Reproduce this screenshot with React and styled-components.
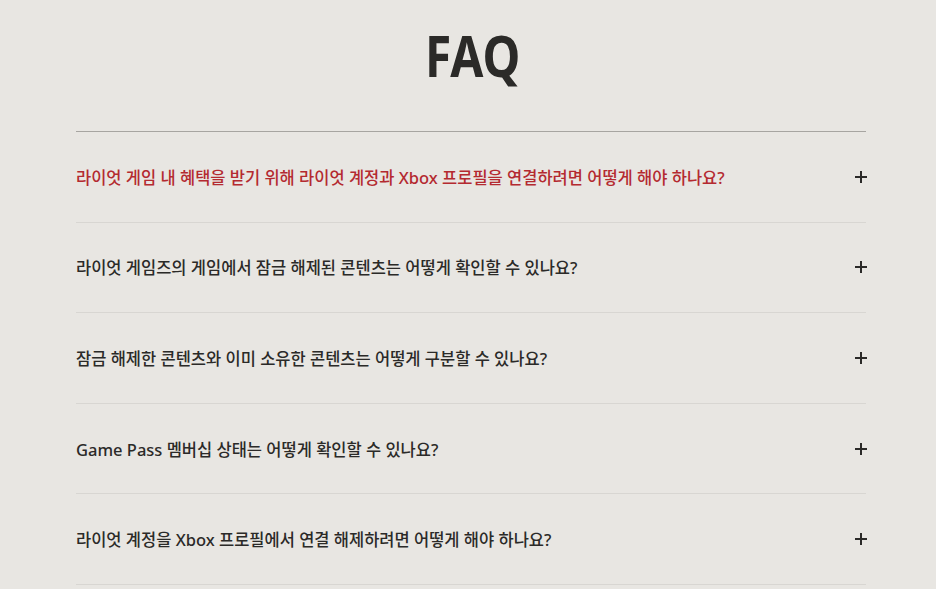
import React from 'react';
import styled, { createGlobalStyle } from 'styled-components';

const GlobalStyle = createGlobalStyle`
  html, body {
    margin: 0;
    padding: 0;
    background: #e8e6e2;
  }
  body {
    font-family: 'Noto Sans', 'Noto Sans CJK KR', sans-serif;
  }
`;

const Page = styled.section`
  width: 936px;
  min-height: 589px;
  box-sizing: border-box;
  padding: 0 70px 0 76px;
`;

const Title = styled.h2`
  margin: 24px 0 45px;
  padding-left: 4px;
  text-align: center;
  font-family: 'Noto Sans', 'Noto Sans CJK KR', sans-serif;
  font-size: 57px;
  line-height: 62px;
  font-weight: 700;
  color: #2b2a28;
  transform: scaleX(0.84);
`;

const List = styled.div`
  border-top: 1px solid #a7a5a1;
`;

const Row = styled.div`
  display: flex;
  align-items: center;
  justify-content: space-between;
  box-sizing: border-box;
  height: 90.6px;
  border-bottom: 1px solid #d8d6d2;
  cursor: pointer;
`;

const Question = styled.span`
  font-family: 'Noto Sans', 'Noto Sans CJK KR', sans-serif;
  font-size: 16.5px;
  font-weight: 500;
  color: ${p => (p.$active ? '#b42a30' : '#2b2a28')};
`;

const Plus = styled.svg`
  width: 12px;
  height: 12px;
  flex: none;
  margin-right: -1px;
`;

const questions = [
  '라이엇 게임 내 혜택을 받기 위해 라이엇 계정과 Xbox 프로필을 연결하려면 어떻게 해야 하나요?',
  '라이엇 게임즈의 게임에서 잠금 해제된 콘텐츠는 어떻게 확인할 수 있나요?',
  '잠금 해제한 콘텐츠와 이미 소유한 콘텐츠는 어떻게 구분할 수 있나요?',
  'Game Pass 멤버십 상태는 어떻게 확인할 수 있나요?',
  '라이엇 계정을 Xbox 프로필에서 연결 해제하려면 어떻게 해야 하나요?',
];

export default function App() {
  return (
    <>
      <GlobalStyle />
      <Page>
        <Title>FAQ</Title>
        <List>
          {questions.map((q, i) => (
            <Row key={q}>
              <Question $active={i === 0}>{q}</Question>
              <Plus viewBox="0 0 12 12">
                <path d="M6 0v12M0 6h12" stroke="#2b2a28" strokeWidth="2" />
              </Plus>
            </Row>
          ))}
        </List>
      </Page>
    </>
  );
}
